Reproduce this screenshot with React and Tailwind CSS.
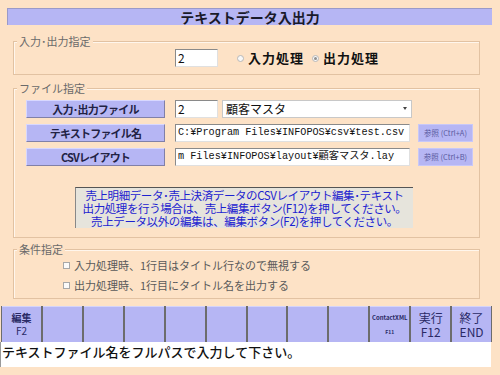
import React from "react";

const jp = { fontFamily: '"Noto Sans CJK JP", "Noto Sans", sans-serif' };
const mono = { fontFamily: '"Liberation Mono", "Noto Sans CJK JP", monospace' };

function Label({ children }) {
  return (
    <div className="w-[139px] h-[18px] bg-[#b6b6f4] border border-t-[#d8d8ff] border-l-[#d8d8ff] border-r-[#8080a8] border-b-[#8080a8] flex items-center justify-center text-[11px] tracking-[-0.8px] font-bold text-[#222244] leading-none">
      {children}
    </div>
  );
}

function Field({ w, size = "text-[12px]", children, className = "", style }) {
  return (
    <div
      className={`h-[18px] bg-white border border-t-[#8a8a8a] border-l-[#8a8a8a] border-r-[#e0e0e0] border-b-[#e0e0e0] flex items-center pl-[2px] text-[#111] leading-none overflow-hidden whitespace-nowrap ${size} ${w} ${className}`}
      style={style}
    >
      {children}
    </div>
  );
}

function RefBtn({ children }) {
  return (
    <div className="w-[55px] h-[18px] bg-[#b6b6f4] border border-[#c8c8f8] flex items-center justify-center text-[7.5px] text-[#5a5aa0] leading-none whitespace-nowrap">
      {children}
    </div>
  );
}

function Group({ title, className, children }) {
  return (
    <div className={`relative ml-[13px] w-[467px] border border-[#e2c2a2] shadow-[inset_1px_1px_0_#fff6ec] ${className}`}>
      <span className="absolute left-[3px] top-[-8px] px-[2px] bg-[#fde2c6] text-[11px] leading-[14px] text-[#6a6a6a]">
        {title}
      </span>
      {children}
    </div>
  );
}

function Radio({ checked }) {
  return (
    <span className="w-[7px] h-[7px] rounded-full border border-[#b8b8b8] bg-[#f8f8f8] flex items-center justify-center">
      {checked && <span className="w-[3px] h-[3px] rounded-full bg-[#909090]" />}
    </span>
  );
}

function Check() {
  return <span className="w-[7px] h-[7px] border border-[#a8a8a8] bg-[#fafafa] inline-block" />;
}

function FKey({ top, bottom, small, tiny }) {
  return (
    <div className="flex-1 bg-[#b6b6f4] border-t border-t-[#d4d4fa] flex flex-col items-center justify-center text-[#2a2a66]">
      {tiny ? (
        <>
          <span className="text-[6px] leading-[6px] font-bold">{top}</span>
          <span className="text-[5px] leading-[5px] font-bold mt-[8px]">{bottom}</span>
        </>
      ) : top ? (
        <>
          <span className={small ? "text-[10px] leading-[10px] font-bold" : "text-[12px] leading-[12px]"}>{top}</span>
          <span className={small ? "text-[10px] leading-[10px] mt-[3px]" : "text-[12px] leading-[12px] mt-[2px]"}>{bottom}</span>
        </>
      ) : null}
    </div>
  );
}

export default function App() {
  return (
    <div className="w-[500px] h-[375px] bg-[#fde2c6] flex flex-col overflow-hidden" style={jp}>
      <div className="mt-[8px] ml-[7px] w-[485px] h-[17px] bg-[#b6b6f4] border-t border-l border-[#9a9ac8] flex items-center justify-center text-[14px] font-bold text-[#1a1a2a] leading-none">
        テキストデータ入出力
      </div>

      <Group title="入力･出力指定" className="mt-[16px] h-[34px] flex items-center">
        <Field w="w-[43px]" className="ml-[161px]">2</Field>
        <span className="ml-[19px] flex items-center gap-[4px]">
          <Radio />
          <span className="text-[13px] tracking-[1px] font-bold text-[#111]">入力処理</span>
        </span>
        <span className="ml-[8px] flex items-center gap-[4px]">
          <Radio checked />
          <span className="text-[13px] tracking-[1px] font-bold text-[#111]">出力処理</span>
        </span>
      </Group>

      <Group title="ファイル指定" className="mt-[13px] h-[150px] flex flex-col pt-[11px] pl-[12px]">
        <div className="flex flex-col gap-[6px]">
          <div className="flex items-center">
            <Label>入力･出力ファイル</Label>
            <Field w="w-[43px]" className="ml-[10px]">2</Field>
            <div className="ml-[4px] w-[190px] h-[18px] bg-white border border-[#c8c8c8] flex items-center pl-[3px] text-[12px] text-[#111] leading-none relative">
              顧客マスタ
              <span className="absolute right-[4px] top-[6px] w-0 h-0 border-l-[2px] border-r-[2px] border-t-[3px] border-l-transparent border-r-transparent border-t-[#444]" />
            </div>
          </div>
          <div className="flex items-center">
            <Label>テキストファイル名</Label>
            <Field w="w-[235px]" size="text-[10.2px]" className="ml-[10px]" style={mono}>
              C:¥Program Files¥INFOPOS¥csv¥test.csv
            </Field>
            <div className="ml-[8px]">
              <RefBtn>参照 (Ctrl+A)</RefBtn>
            </div>
          </div>
          <div className="flex items-center">
            <Label>CSVレイアウト</Label>
            <Field w="w-[235px]" size="text-[10.2px]" className="ml-[10px]" style={mono}>
              m Files¥INFOPOS¥layout¥顧客マスタ.lay
            </Field>
            <div className="ml-[8px]">
              <RefBtn>参照 (Ctrl+B)</RefBtn>
            </div>
          </div>
        </div>
        <div className="mt-[21px] ml-[49px] w-[338px] h-[41px] bg-[#e6e4dc] border-t border-l border-t-[#555] border-l-[#888] flex flex-col items-center justify-center text-[11.5px] leading-[13px] text-[#1c22d0] whitespace-nowrap tracking-[-0.4px]">
          <span>売上明細データ･売上決済データのCSVレイアウト編集･テキスト</span>
          <span>出力処理を行う場合は、売上編集ボタン(F12)を押してください。</span>
          <span>売上データ以外の編集は、編集ボタン(F2)を押してください。</span>
        </div>
      </Group>

      <Group title="条件指定" className="mt-[11px] h-[50px] flex flex-col pl-[49px] pt-[9px] gap-[8px]">
        <div className="flex items-center gap-[4px] text-[11px] leading-[12px] text-[#5a5a5a]">
          <Check />
          <span>入力処理時、1行目はタイトル行なので無視する</span>
        </div>
        <div className="flex items-center gap-[4px] text-[11px] leading-[12px] text-[#5a5a5a]">
          <Check />
          <span>出力処理時、1行目にタイトル名を出力する</span>
        </div>
      </Group>

      <div className="mt-[7px] ml-[1px] w-[491px] h-[36px] bg-[#6c6c6c] flex gap-[2px] px-[1px]">
        <FKey top="編集" bottom="F2" small />
        <FKey />
        <FKey />
        <FKey />
        <FKey />
        <FKey />
        <FKey />
        <FKey />
        <FKey />
        <FKey top="ContactXML" bottom="F11" tiny />
        <FKey top="実行" bottom="F12" />
        <FKey top="終了" bottom="END" />
      </div>

      <div className="w-[491px] h-[25px] bg-white border-l border-[#999] pl-[1px] pt-[2px] text-[13px] leading-[16px] font-medium text-[#111]">
        テキストファイル名をフルパスで入力して下さい。
      </div>
    </div>
  );
}
